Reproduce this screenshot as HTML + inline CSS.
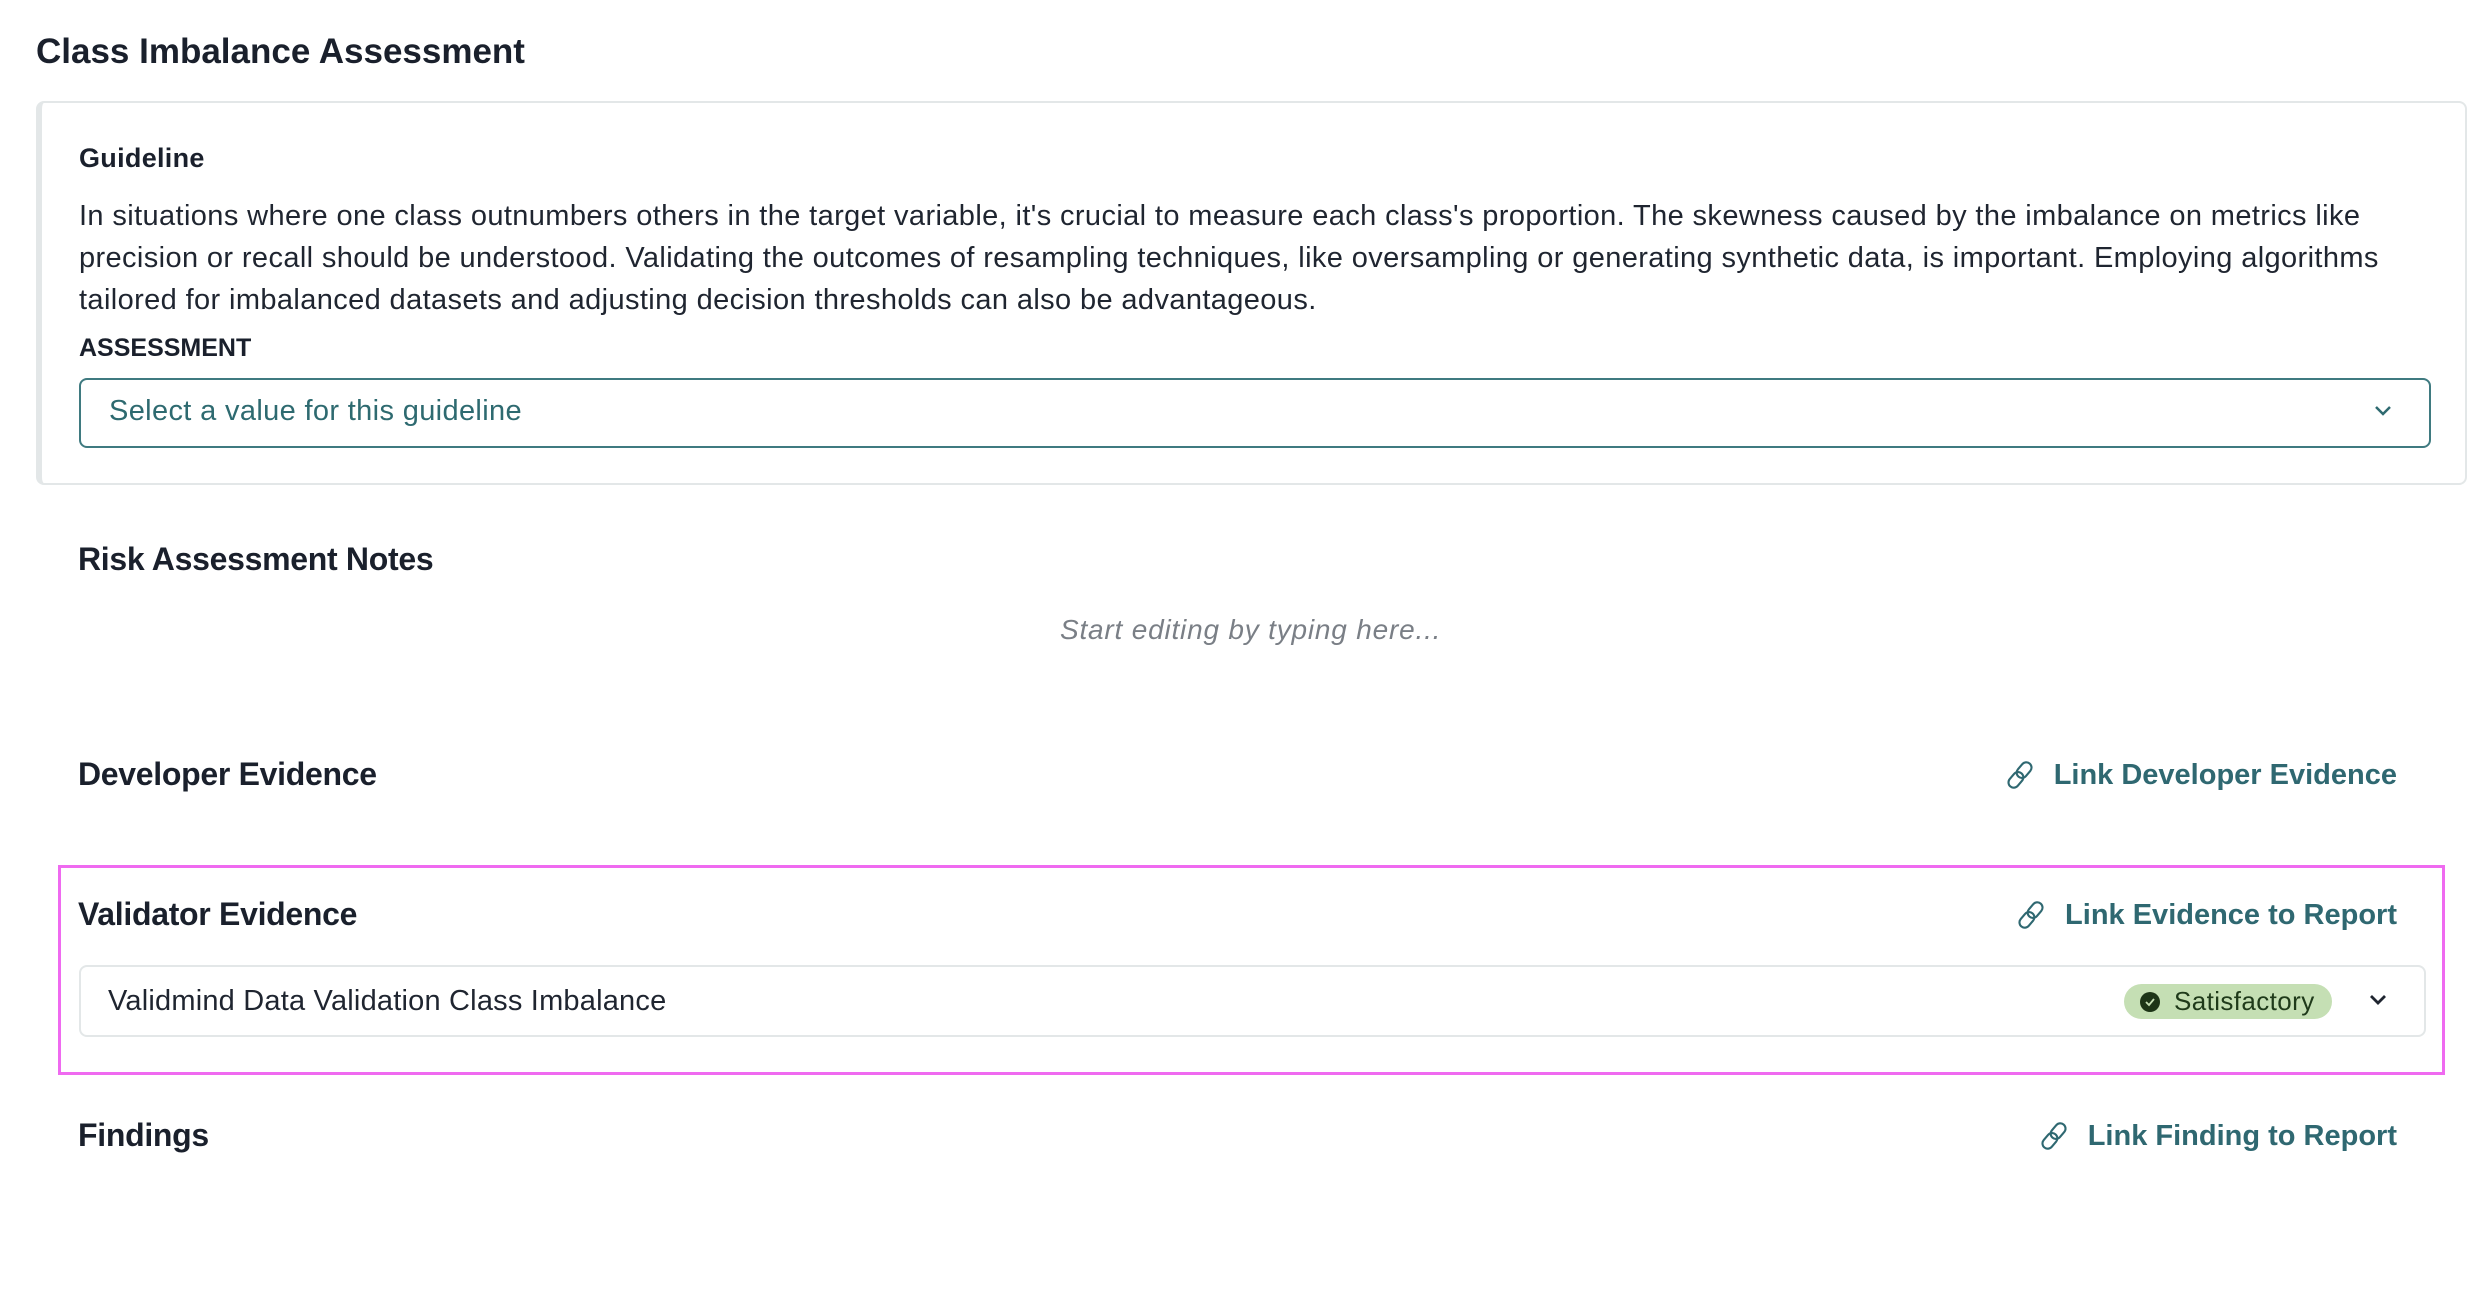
<!DOCTYPE html>
<html><head><meta charset="utf-8"><style>
*{margin:0;padding:0;box-sizing:border-box}
body{width:2484px;height:1298px;background:#fff;font-family:"Liberation Sans",sans-serif;color:#1a202c;position:relative;overflow:hidden}
.a{position:absolute;white-space:nowrap}
.h{font-weight:700;font-size:32px;letter-spacing:-0.3px}
.link{color:#2f6871;font-weight:700;font-size:29px;display:flex;align-items:center;gap:16px}
</style></head><body>
<div class="a" style="left:36px;top:32px;font-size:35px;font-weight:700;letter-spacing:0px">Class Imbalance Assessment</div>
<div class="a" style="left:36px;top:101px;width:2431px;height:384px;border:2px solid #e3e7e8;border-left:6px solid #e3e7e8;border-radius:8px"></div>
<div class="a" style="left:79px;top:143px;font-size:27px;font-weight:700;letter-spacing:0.3px">Guideline</div>
<div class="a" style="left:79px;top:195px;font-size:29px;letter-spacing:0.38px;line-height:42px;color:#1f2530">In situations where one class outnumbers others in the target variable, it's crucial to measure each class's proportion. The skewness caused by the imbalance on metrics like<br>precision or recall should be understood. Validating the outcomes of resampling techniques, like oversampling or generating synthetic data, is important. Employing algorithms<br>tailored for imbalanced datasets and adjusting decision thresholds can also be advantageous.</div>
<div class="a" style="left:79px;top:334px;font-size:25px;font-weight:700">ASSESSMENT</div>
<div class="a" style="left:79px;top:378px;width:2352px;height:70px;border:2px solid #3f7a80;border-radius:8px"></div>
<div class="a" style="left:109px;top:395px;font-size:29px;letter-spacing:0.35px;color:#2e6a70">Select a value for this guideline</div>
<svg class="a" style="left:2372px;top:403px" width="22" height="16" viewBox="0 0 22 16"><path d="M4 4l7 7 7-7" fill="none" stroke="#2e6a70" stroke-width="2.5"/></svg>
<div class="a h" style="left:78px;top:541px">Risk Assessment Notes</div>
<div class="a" style="left:1060px;top:614px;font-size:28px;letter-spacing:0.8px;font-style:italic;color:#7a7f86">Start editing by typing here...</div>
<div class="a h" style="left:78px;top:756px">Developer Evidence</div>
<div class="a link" style="right:87px;top:757px"><svg width="36" height="36" viewBox="0 0 24 24" fill="none" stroke="#2f6871" stroke-width="1.4" stroke-linecap="round"><g transform="rotate(-50 12 12)"><rect x="2" y="8.5" width="11.5" height="7" rx="3.5"/><rect x="10.5" y="8.5" width="11.5" height="7" rx="3.5"/></g></svg>Link Developer Evidence</div>
<div class="a" style="left:58px;top:865px;width:2387px;height:210px;border:3px solid #ef6af0"></div>
<div class="a h" style="left:78px;top:896px">Validator Evidence</div>
<div class="a link" style="right:87px;top:897px"><svg width="36" height="36" viewBox="0 0 24 24" fill="none" stroke="#2f6871" stroke-width="1.4" stroke-linecap="round"><g transform="rotate(-50 12 12)"><rect x="2" y="8.5" width="11.5" height="7" rx="3.5"/><rect x="10.5" y="8.5" width="11.5" height="7" rx="3.5"/></g></svg>Link Evidence to Report</div>
<div class="a" style="left:79px;top:965px;width:2347px;height:72px;border:2px solid #e3e7e8;border-radius:8px"></div>
<div class="a" style="left:108px;top:985px;font-size:29px;letter-spacing:0.2px;color:#1f2530">Validmind Data Validation Class Imbalance</div>
<div class="a" style="left:2124px;top:984px;width:208px;height:35px;background:#c5dfb4;border-radius:18px;display:flex;align-items:center;padding-left:16px;gap:14px;font-size:26px;letter-spacing:0.4px;color:#1f3a1a"><svg width="20" height="20" viewBox="0 0 20 20"><circle cx="10" cy="10" r="10" fill="#1d3517"/><path d="M6 10l3 3 5-6" fill="none" stroke="#c5dfb4" stroke-width="1.8"/></svg>Satisfactory</div>
<svg class="a" style="left:2367px;top:992px" width="22" height="16" viewBox="0 0 22 16"><path d="M4 4l7 7 7-7" fill="none" stroke="#1f2530" stroke-width="2.8"/></svg>
<div class="a h" style="left:78px;top:1117px">Findings</div>
<div class="a link" style="right:87px;top:1118px"><svg width="36" height="36" viewBox="0 0 24 24" fill="none" stroke="#2f6871" stroke-width="1.4" stroke-linecap="round"><g transform="rotate(-50 12 12)"><rect x="2" y="8.5" width="11.5" height="7" rx="3.5"/><rect x="10.5" y="8.5" width="11.5" height="7" rx="3.5"/></g></svg>Link Finding to Report</div>
</body></html>
